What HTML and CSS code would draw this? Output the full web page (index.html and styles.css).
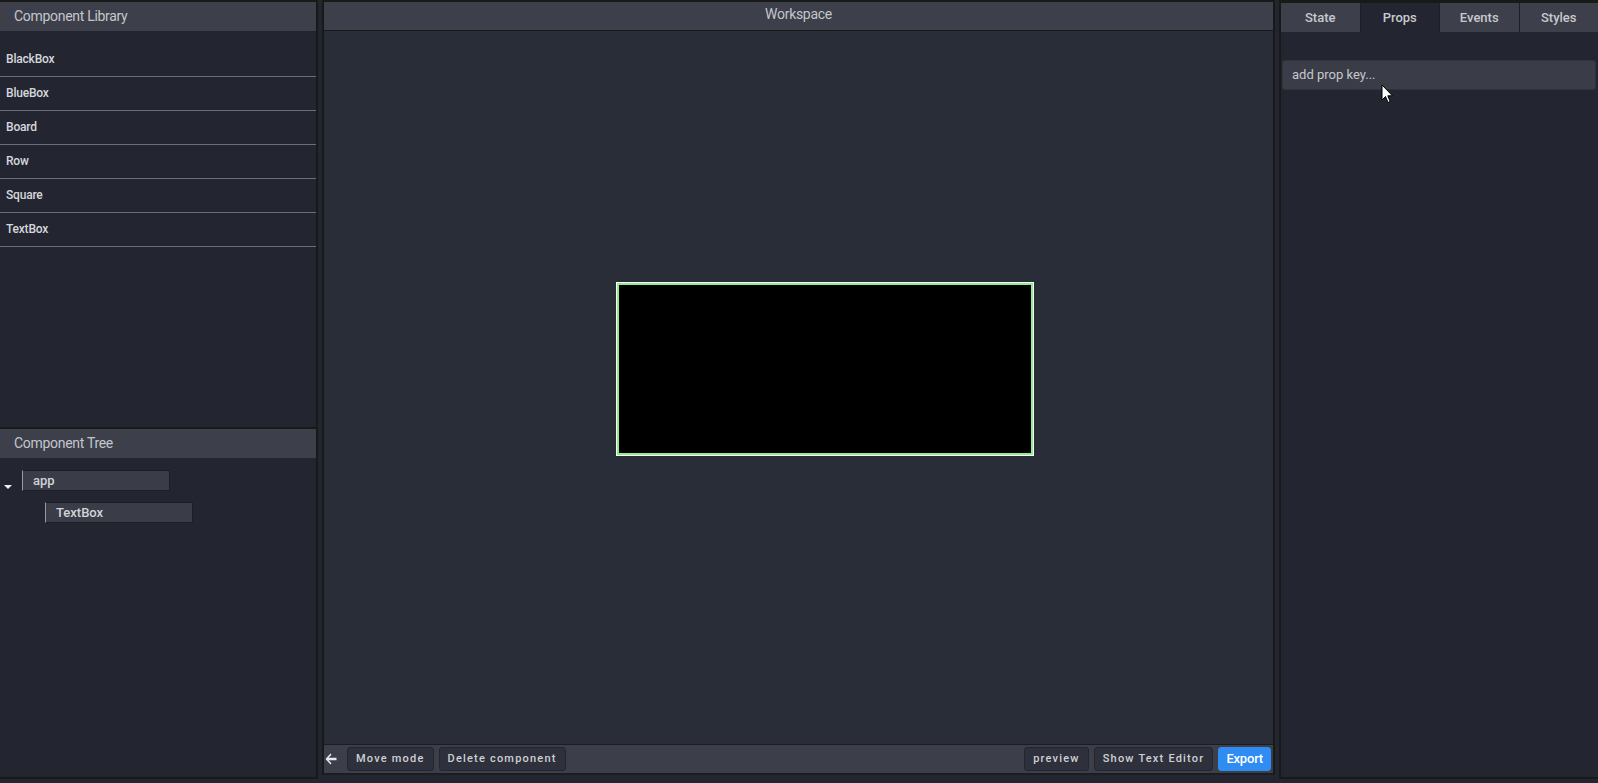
FILE: index.html
```html
<!DOCTYPE html>
<html>
<head>
<meta charset="utf-8">
<link rel="stylesheet" href="styles.css">
</head>
<body>
<div class="app">
  <aside class="left">
    <section class="library">
      <div class="panel-header">Component Library</div>
      <ul class="lib-list">
        <li>BlackBox</li>
        <li>BlueBox</li>
        <li>Board</li>
        <li>Row</li>
        <li>Square</li>
        <li>TextBox</li>
      </ul>
    </section>
    <section class="tree">
      <div class="panel-header">Component Tree</div>
      <div class="tree-body">
        <div class="tree-row">
          <span class="caret"></span>
          <div class="node">app</div>
        </div>
        <div class="tree-row child">
          <div class="node">TextBox</div>
        </div>
      </div>
    </section>
  </aside>

  <main class="center">
    <div class="ws-header">Workspace</div>
    <div class="canvas">
      <div class="blackbox"></div>
    </div>
    <div class="toolbar">
      <svg class="back" width="12" height="12" viewBox="0 0 12 12"><path d="M5.5 0.5 L0.5 6 L5.5 11.5 L6.5 10.2 L3.6 7.2 L11.5 7.2 L11.5 4.8 L3.6 4.8 L6.5 1.8 Z" fill="#e8e8ec"/></svg>
      <button class="btn">Move mode</button>
      <button class="btn">Delete component</button>
      <div class="spacer"></div>
      <button class="btn">preview</button>
      <button class="btn">Show Text Editor</button>
      <button class="btn export">Export</button>
    </div>
  </main>

  <aside class="right">
    <div class="tabs">
      <div class="tab">State</div>
      <div class="tab active">Props</div>
      <div class="tab">Events</div>
      <div class="tab">Styles</div>
    </div>
    <div class="props">
      <div class="prop-input">add prop key...</div>
    </div>
    <svg class="cursor" width="14" height="20" viewBox="0 0 14 20"><path d="M1 1 L1 16 L4.5 12.5 L7 18.5 L9.2 17.6 L6.8 11.8 L11.5 11.8 Z" fill="#fff" stroke="#000" stroke-width="1"/></svg>
  </aside>
</div>
</body>
</html>
```

FILE: styles.css
```css
* { box-sizing: border-box; }
html, body { margin: 0; padding: 0; }
body {
  background: #232531;
  font-family: Roboto, "Liberation Sans", sans-serif;
  color: #d2d3d8;
  width: 1598px;
  height: 783px;
  overflow: hidden;
}
.app {
  display: flex;
  gap: 4px;
  height: 779px;
}
.left {
  width: 318px;
  display: flex;
  flex-direction: column;
  border: 2px solid #181a17;
  border-left: none;
  background: #232531;
}
.panel-header {
  height: 29px;
  background: #3d3f4a;
  color: #c4c6cc;
  font-size: 14px;
  letter-spacing: -0.3px;
  padding-left: 14px;
  line-height: 29px;
}
.library {
  height: 427px;
  border-bottom: 2px solid #181a17;
}
.lib-list {
  list-style: none;
  margin: 0;
  padding: 12px 0 0 0;
}
.lib-list li {
  height: 34px;
  line-height: 33px;
  border-bottom: 1px solid #6b6d77;
  font-size: 12px;
  font-weight: 500;
  padding-left: 6px;
  color: #d6d7dc;
  letter-spacing: -0.2px;
}
.tree { flex: 1; }
.tree-body { padding: 12px 0 0 4px; }
.tree-row {
  display: flex;
  align-items: center;
  height: 21px;
  margin-bottom: 11px;
}
.caret {
  width: 0;
  height: 0;
  border-left: 4px solid transparent;
  border-right: 4px solid transparent;
  border-top: 4px solid #f0f0f0;
  margin-top: 12px;
  margin-right: 10px;
}
.tree-row.child { padding-left: 41px; }
.node {
  width: 148px;
  height: 21px;
  background: #3a3c47;
  border: 1px solid #1d1f25;
  border-left: 1px solid #9a9ba2;
  font-size: 13px;
  font-weight: 500;
  line-height: 19px;
  padding-left: 10px;
  color: #d2d3d8;
}

.center {
  width: 953px;
  border: 2px solid #181a17;
  border-bottom: none;
  display: flex;
  flex-direction: column;
  background: #292d38;
  height: 775px;
}
.ws-header {
  height: 29px;
  background: #3d3f4a;
  border-bottom: 1px solid #181a17;
  text-align: center;
  line-height: 24px;
  font-size: 14px;
  color: #c4c6cc;
  letter-spacing: -0.3px;
}
.canvas {
  flex: 1;
  position: relative;
}
.blackbox {
  position: absolute;
  left: 293px;
  top: 252px;
  width: 416px;
  height: 172px;
  background: #000;
  border: 2px solid #90ee90;
  outline: 1px solid #ffffff;
}
.toolbar {
  height: 31px;
  background: #3c3f4a;
  border-top: 1px solid #1b1d21;
  border-bottom: 2px solid #1b1d21;
  display: flex;
  align-items: center;
  gap: 5px;
  padding: 0 2px 0 0;
}
.back { margin: 0 5px 0 1px; }
.spacer { flex: 1; }
.btn {
  height: 24px;
  background: #2e313c;
  border: 1px solid #24262e;
  border-radius: 3px;
  color: #cfd0d6;
  font-family: Roboto, "Liberation Sans", sans-serif;
  font-size: 11px;
  font-weight: 500;
  letter-spacing: 1.2px;
  padding: 0 8px;
  line-height: 22px;
}
.btn.export {
  background: #2f8cf3;
  border-color: #2f8cf3;
  color: #ffffff;
  letter-spacing: -0.2px;
  font-size: 13px;
  padding: 0 7px;
}

.right {
  flex: 1;
  border: 2px solid #181a17;
  border-right: none;
  border-top: 3px solid #181a17;
  background: #232531;
  position: relative;
  height: 779px;
}
.tabs {
  display: flex;
  height: 29px;
}
.tab {
  flex: 1;
  background: #3d3f4a;
  border-right: 1px solid #1d1f24;
  text-align: center;
  line-height: 29px;
  font-size: 13px;
  font-weight: 500;
  color: #c8c9ce;
}
.tab:last-child { border-right: none; }
.tab.active { background: #232531; }
.props { padding: 28px 2px 0 1px; }
.prop-input {
  height: 30px;
  background: #3a3c47;
  border-radius: 3px;
  border: 1px solid #30323c;
  font-size: 13px;
  color: #c6c7cc;
  line-height: 28px;
  padding-left: 9px;
}
.cursor {
  position: absolute;
  left: 100px;
  top: 81px;
}
```
